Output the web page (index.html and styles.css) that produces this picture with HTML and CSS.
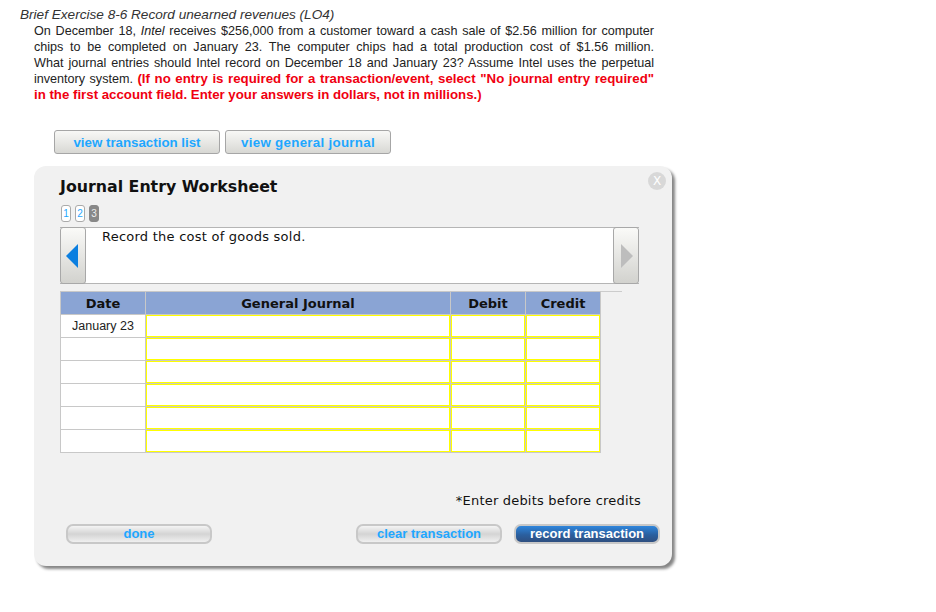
FILE: index.html
```html
<!DOCTYPE html>
<html lang="en">
<head>
<meta charset="utf-8">
<title>Journal Entry Worksheet</title>
<link rel="stylesheet" href="styles.css">
</head>
<body>
<main class="page">
  <h1 class="title">Brief Exercise 8-6 Record unearned revenues (LO4)</h1>
  <p class="prompt">
    <span class="line">On December 18, <i>Intel</i> receives $256,000 from a customer toward a cash sale of $2.56 million for computer</span>
    <span class="line">chips to be completed on January 23. The computer chips had a total production cost of $1.56 million.</span>
    <span class="line">What journal entries should Intel record on December 18 and January 23? Assume Intel uses the perpetual</span>
    <span class="line">inventory system. <b class="alert">(If no entry is required for a transaction/event, select "No journal entry required"</b></span>
    <span class="line last"><b class="alert">in the first account field. Enter your answers in dollars, not in millions.)</b></span>
  </p>
  <div class="views">
    <button class="view-btn list-btn">view transaction list</button>
    <button class="view-btn journal-btn">view general journal</button>
  </div>
  <section class="panel">
    <span class="close">X</span>
    <h2 class="panel-title">Journal Entry Worksheet</h2>
    <div class="steps">
      <span class="step">1</span><span class="step">2</span><span class="step current">3</span>
    </div>
    <div class="instruction">
      <button class="nav prev" aria-label="previous"><svg width="12" height="24" viewBox="0 0 12 24"><path d="M12 0V24L0 12Z" fill="#0b7fe0"/></svg></button>
      <div class="instruction-text">Record the cost of goods sold.</div>
      <button class="nav next" aria-label="next"><svg width="12" height="24" viewBox="0 0 12 24"><path d="M0 0V24L12 12Z" fill="#bdbdbd"/></svg></button>
    </div>
    <div class="rule"></div>
    <table class="sheet">
      <colgroup><col class="c-date"><col class="c-journal"><col class="c-amount"><col class="c-amount"></colgroup>
      <thead><tr><th>Date</th><th>General Journal</th><th>Debit</th><th>Credit</th></tr></thead>
      <tbody>
        <tr><td class="date">January 23</td><td class="in"></td><td class="in"></td><td class="in"></td></tr>
        <tr><td class="date"></td><td class="in"></td><td class="in"></td><td class="in"></td></tr>
        <tr><td class="date"></td><td class="in"></td><td class="in"></td><td class="in"></td></tr>
        <tr><td class="date"></td><td class="in"></td><td class="in"></td><td class="in"></td></tr>
        <tr><td class="date"></td><td class="in"></td><td class="in"></td><td class="in"></td></tr>
        <tr><td class="date"></td><td class="in"></td><td class="in"></td><td class="in"></td></tr>
      </tbody>
    </table>
    <p class="note">*Enter debits before credits</p>
    <div class="actions">
      <button class="pill">done</button>
      <div class="actions-right">
        <button class="pill">clear transaction</button>
        <button class="pill primary">record transaction</button>
      </div>
    </div>
  </section>
</main>
</body>
</html>
```
FILE: styles.css
```css
* { box-sizing: border-box; }
html, body { margin: 0; padding: 0; background: #fff; }
body { font-family: "Liberation Sans", Arial, sans-serif; color: #111; overflow: hidden; }
.page { width: 936px; height: 612px; padding-top: 7px; }
.title { margin: 0 0 0 20px; font-size: 13.6px; line-height: 16px; font-weight: normal; font-style: italic; color: #333; }
.prompt { margin: 0 0 0 34px; width: 620px; font-size: 12.6px; line-height: 16px; color: #222; }
.line { display: block; white-space: nowrap; text-align: justify; text-align-last: justify; }
.line.last { text-align-last: left; }
.alert { color: #f00010; font-size: 13.25px; }
.views { display: flex; gap: 5px; margin: 27px 0 0 54px; }
.view-btn { height: 24px; padding: 0; border: 1px solid #a6a6a6; border-radius: 3px; background: linear-gradient(#f8f8f6, #d8d8d4); color: #1ea7ff; font: bold 13.3px "Liberation Sans", Arial, sans-serif; }
.list-btn { width: 166px; }
.journal-btn { width: 166px; letter-spacing: .3px; }
.panel { position: relative; width: 638px; height: 400px; margin: 12px 0 0 34px; padding: 10px 26px 0; background: #f1f1f1; border-radius: 12px; box-shadow: 3px 3px 3px #858585; font-family: "DejaVu Sans", Verdana, sans-serif; }
.close { position: absolute; top: 6px; right: 6px; width: 18px; height: 18px; border-radius: 50%; background: #d8d8d8; color: #fff; font-size: 12px; line-height: 18px; text-align: center; }
.panel-title { margin: 0; font-size: 15.8px; line-height: 22px; font-weight: bold; color: #111; }
.steps { display: flex; gap: 4px; margin-top: 7px; margin-left: 1px; }
.step { width: 10px; height: 17px; border: 1px solid #aaa; border-radius: 3px; background: #fff; color: #1ea7ff; font: 10px/15px "Liberation Sans", Arial, sans-serif; text-align: center; }
.step.current { background: #888; border-color: #888; color: #eee; }
.instruction { display: flex; width: 579px; height: 57px; margin-top: 5px; background: #fff; border: 1px solid #b5b5b5; border-left: 0; border-right: 0; }
.nav { flex: none; width: 26px; height: 57px; margin-top: -1px; padding: 0; display: flex; align-items: center; justify-content: center; border: 1px solid #a8a8a8; border-radius: 3px; background: linear-gradient(#fafaf8, #d2d2ce); }
.nav.prev { padding-right: 2px; }
.nav.next { padding-left: 2px; }
.instruction-text { flex: 1; padding: 1px 16px; font-size: 13px; line-height: 16px; letter-spacing: .24px; color: #111; }
.rule { width: 562px; height: 1px; margin-top: 7px; background: #ccc; }
.sheet { width: 541px; table-layout: fixed; border-collapse: separate; border-spacing: 1px; background: #c8c8c8; margin-top: -1px; }
.c-date { width: 84px; }
.c-journal { width: 304px; }
.c-amount { width: 74px; }
.sheet th { height: 22px; padding: 0; background: #8aa4d4; font-size: 13px; font-weight: bold; color: #111; }
.sheet td { height: 22px; padding: 0; background: #fff; }
.sheet td.date { font: 12.5px "Liberation Sans", Arial, sans-serif; color: #222; text-align: center; }
.sheet td.in { box-shadow: inset 0 0 0 1px #ffff00; }
.note { margin: 40px 0 0; width: 581px; text-align: right; font-size: 13px; line-height: 16px; letter-spacing: .2px; color: #111; }
.actions { display: flex; justify-content: space-between; width: 594px; margin: 15px 0 0 6px; }
.actions-right { display: flex; gap: 12px; }
.pill { width: 146px; height: 20px; padding: 0 0 2px; border: 2px solid #c8c8c8; border-radius: 7px; background: linear-gradient(#f4f4f4 0, #d4d4d4 50%, #f0f0f0 100%); color: #1ea7ff; font: bold 13px "Liberation Sans", Arial, sans-serif; }
.pill.primary { background: linear-gradient(#2f86dc 0, #2a5f9f 55%, #2f4f80 100%); color: #fff; }
```
